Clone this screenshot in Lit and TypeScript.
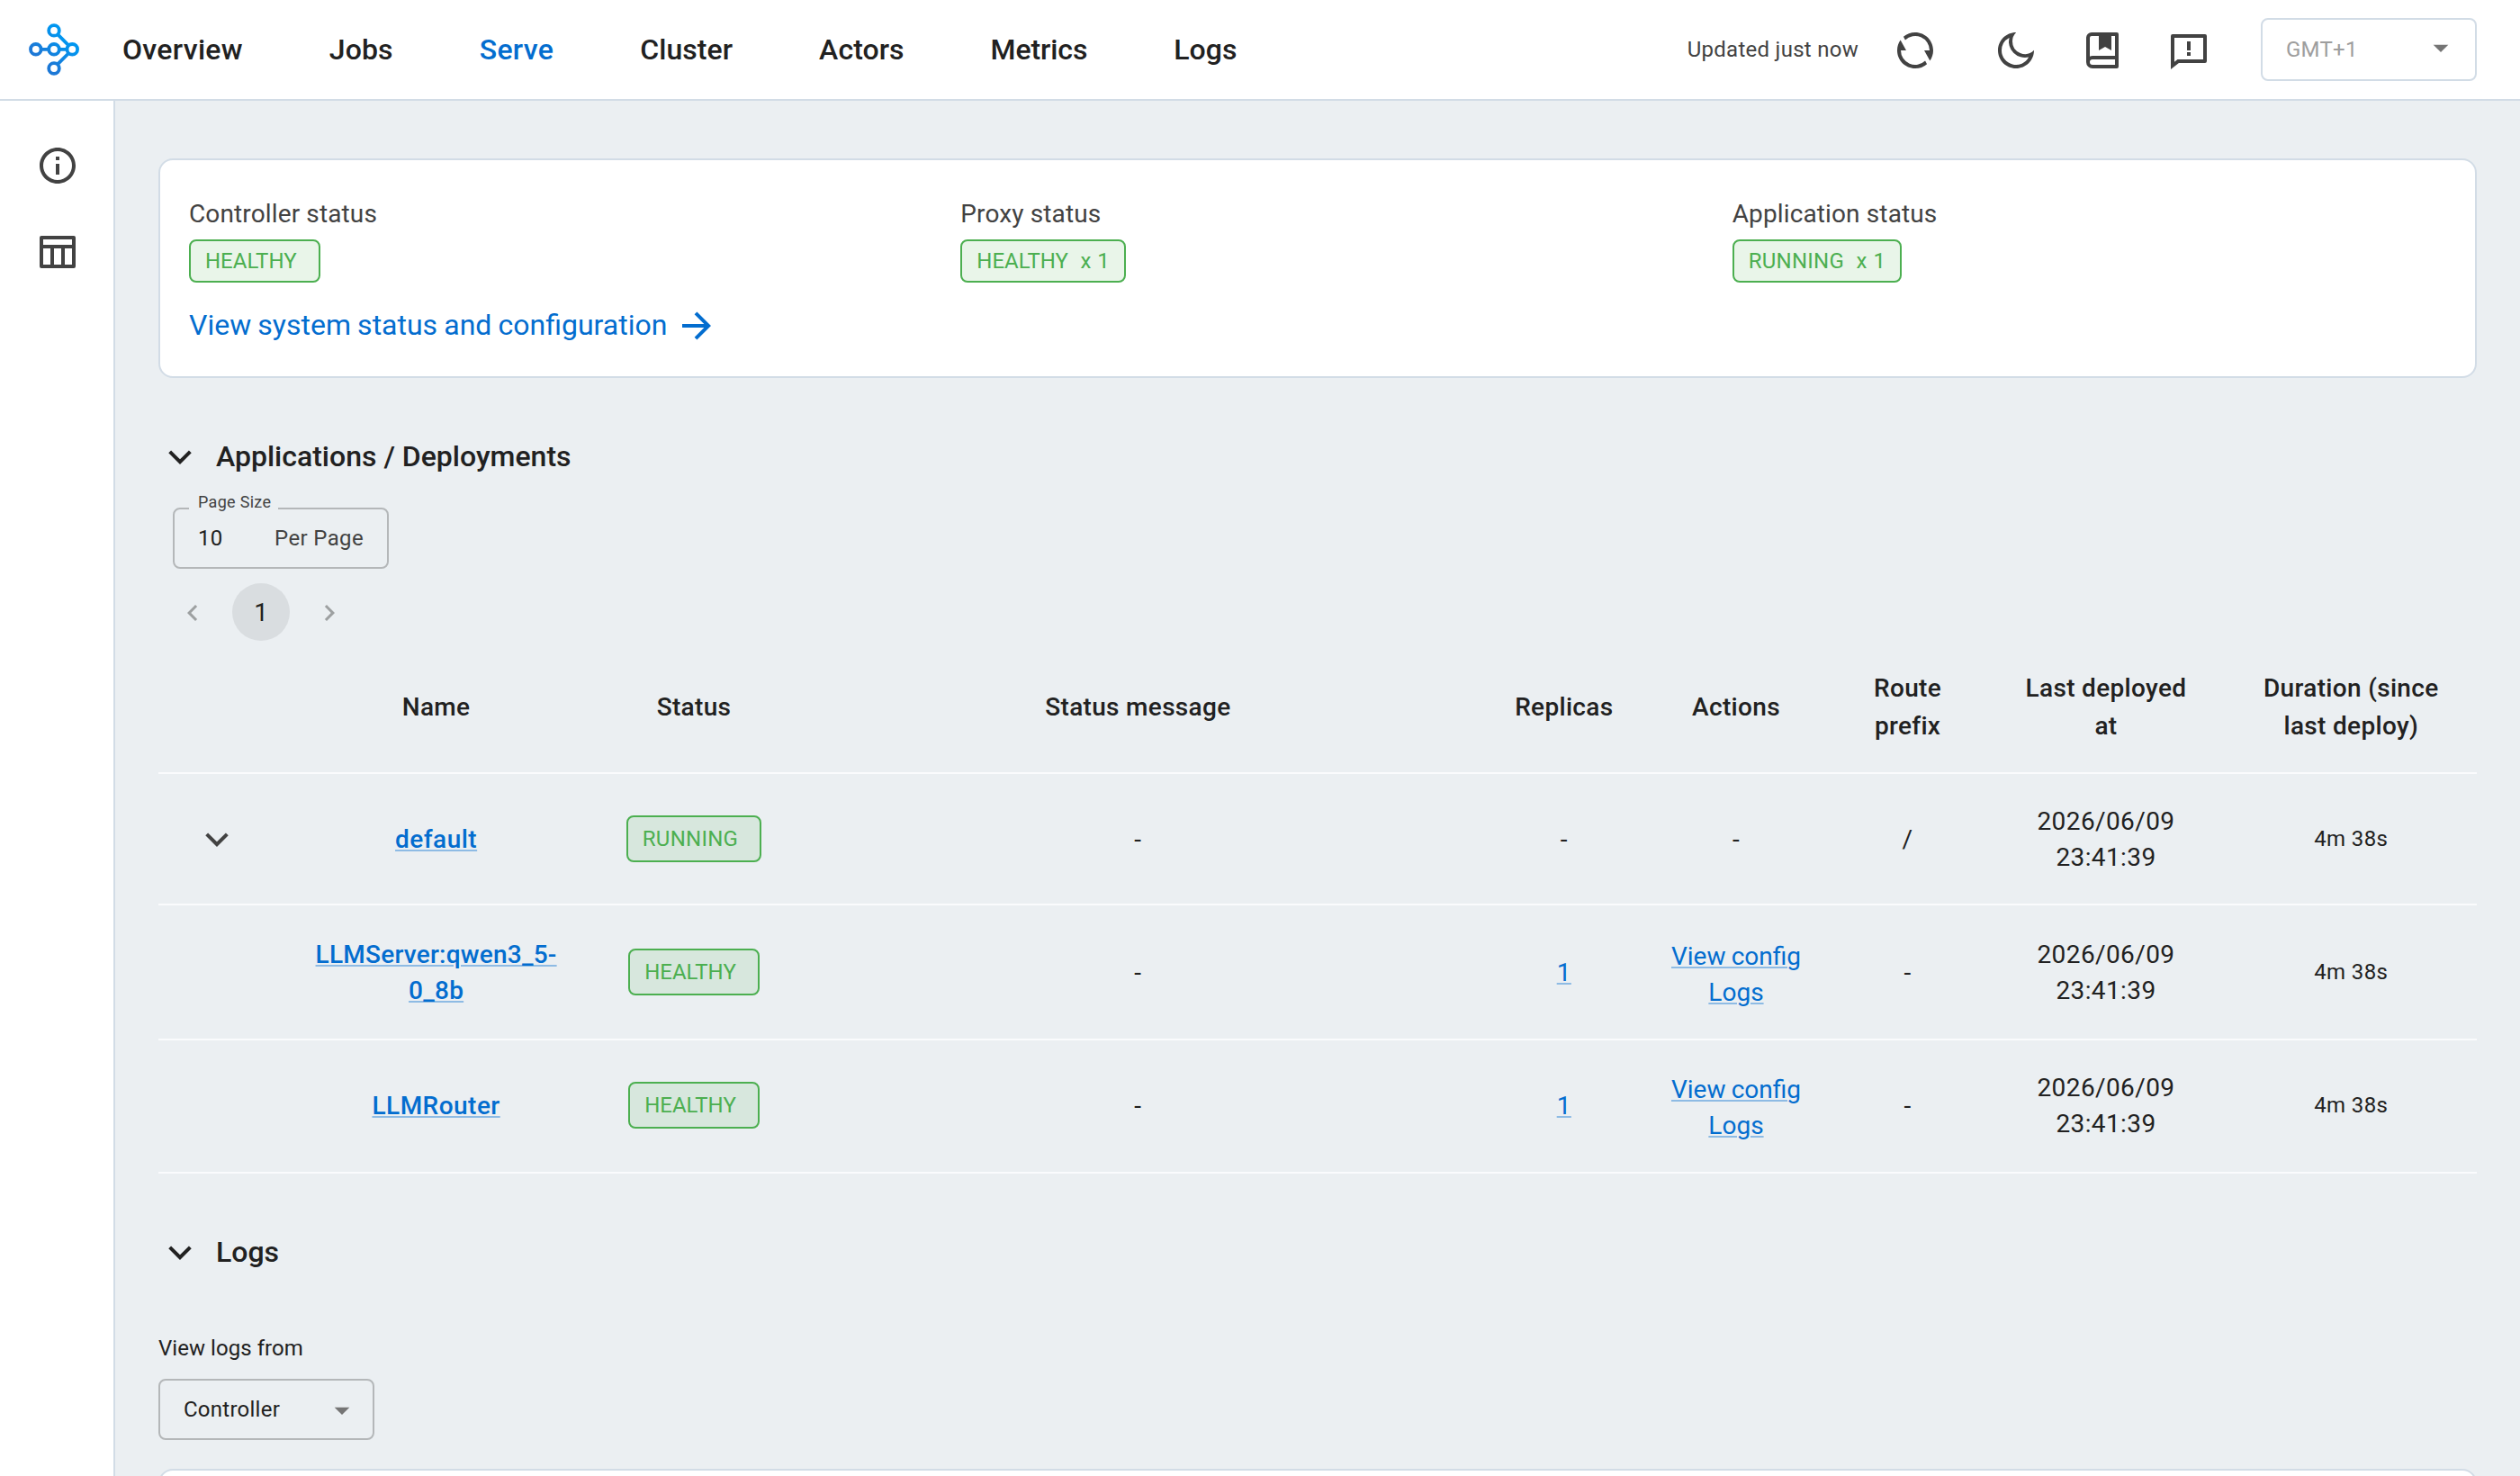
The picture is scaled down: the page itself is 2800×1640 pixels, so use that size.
import { LitElement, html, css, svg, nothing } from "lit";
import { customElement, property } from "lit/decorators.js";
import { styleMap } from "lit/directives/style-map.js";

const ICONS: Record<string, string> = {
  refresh:
    "M5.463 4.433A9.961 9.961 0 0 1 12 2c5.523 0 10 4.477 10 10 0 2.136-.67 4.116-1.81 5.74L17 12h3A8 8 0 0 0 6.46 6.228l-.997-1.795zm13.074 15.134A9.961 9.961 0 0 1 12 22C6.477 22 2 17.523 2 12c0-2.136.67-4.116 1.81-5.74L7 12H4a8 8 0 0 0 13.54 5.772l.997 1.795z",
  moon: "M10 7a7 7 0 0 0 12 4.9v.1c0 5.523-4.477 10-10 10S2 17.523 2 12 6.477 2 12 2h.1A6.979 6.979 0 0 0 10 7zm-6 5a8 8 0 0 0 15.062 3.762A9 9 0 0 1 8.238 4.938 7.999 7.999 0 0 0 4 12z",
  book: "M20 22H6.5A3.5 3.5 0 0 1 3 18.5V5a3 3 0 0 1 3-3h14a1 1 0 0 1 1 1v18a1 1 0 0 1-1 1zm-1-2v-3H6.5a1.5 1.5 0 0 0 0 3H19zM10 4H6a1 1 0 0 0-1 1v10.337A3.486 3.486 0 0 1 6.5 15H19V4h-2v8l-3.5-2-3.5 2V4z",
  feedback:
    "M6.455 19L2 22.5V4a1 1 0 0 1 1-1h18a1 1 0 0 1 1 1v14a1 1 0 0 1-1 1H6.455zM4 18.385L5.763 17H20V5H4v13.385zM11 13h2v2h-2v-2zm0-6h2v5h-2V7z",
  info: "M12 22C6.477 22 2 17.523 2 12S6.477 2 12 2s10 4.477 10 10-4.477 10-10 10zm0-2a8 8 0 1 0 0-16 8 8 0 0 0 0 16zM11 7h2v2h-2V7zm0 4h2v6h-2v-6z",
  table:
    "M4 8h16V5H4v3zm10 11v-9h-4v9h4zm2 0h4v-9h-4v9zm-8 0v-9H4v9h4zM3 3h18a1 1 0 0 1 1 1v16a1 1 0 0 1-1 1H3a1 1 0 0 1-1-1V4a1 1 0 0 1 1-1z",
  arrow:
    "M16.172 11l-5.364-5.364 1.414-1.414L20 12l-7.778 7.778-1.414-1.414L16.172 13H4v-2z",
  down: "M12 13.172l4.95-4.95 1.414 1.414L12 16 5.636 9.636 7.05 8.222z",
  prev: "M15.41 7.41L14 6l-6 6 6 6 1.41-1.41L10.83 12z",
  next: "M10 6L8.59 7.41 13.17 12l-4.58 4.59L10 18l6-6z",
  caret: "M7 10l5 5 5-5z",
};

const icon = (name: string, cls = "") =>
  html`<svg class="icon ${cls}" viewBox="0 0 24 24" aria-hidden="true">
    ${svg`<path d=${ICONS[name]} />`}
  </svg>`;

const base = css`
  * {
    box-sizing: border-box;
  }
  .icon {
    display: block;
    flex: none;
    width: 48px;
    height: 48px;
    fill: currentColor;
  }
`;

@customElement("status-chip")
class StatusChip extends LitElement {
  @property() status = "";
  @property() suffix = "";

  static styles = css`
    :host {
      display: inline-flex;
    }
    .chip {
      display: flex;
      box-sizing: border-box;
      height: var(--chip-height, 48px);
      padding: 0 16px;
      align-items: center;
      border: 2px solid #4caf50;
      border-radius: 8px;
      background: rgba(76, 175, 80, 0.125);
      color: #4caf50;
      font-size: 24px;
      line-height: 36px;
      letter-spacing: 0;
      white-space: nowrap;
    }
    .running {
      letter-spacing: 0.26px;
    }
    .tail {
      width: 8px;
    }
    .suffix {
      margin-left: 13.5px;
      letter-spacing: 0.5px;
    }
  `;

  render() {
    return html`<span class="chip">
      <span class=${this.status.toLowerCase()}>${this.status}</span>
      ${this.suffix
        ? html`<span class="suffix">${this.suffix}</span>`
        : html`<span class="tail"></span>`}
    </span>`;
  }
}

const TABS = [
  { label: "Overview", tracking: 0.31 },
  { label: "Jobs", tracking: 0.1 },
  { label: "Serve", tracking: 0.35, current: true },
  { label: "Cluster", tracking: 0.05 },
  { label: "Actors", tracking: 0.05 },
  { label: "Metrics", tracking: -0.1 },
  { label: "Logs", tracking: 0 },
];

@customElement("top-bar")
class TopBar extends LitElement {
  static styles = [
    base,
    css`
      :host {
        display: flex;
        box-sizing: border-box;
        height: 112px;
        padding: 0 48px 0 32px;
        align-items: center;
        border-bottom: 2px solid #d2dce6;
        background: #fff;
      }
      .logo {
        width: 56px;
        height: 60px;
        margin-right: 48px;
      }
      .nav {
        display: flex;
        gap: 96px;
        flex: 1;
        color: #212121;
        font-size: 32px;
        font-weight: 500;
        line-height: 48px;
      }
      .current {
        color: #036dcf;
      }
      .tools {
        display: flex;
        align-items: center;
        color: #424242;
      }
      .updated {
        margin-right: 39px;
        font-size: 24px;
        line-height: 36px;
        letter-spacing: 0.28px;
      }
      .actions {
        display: flex;
        gap: 48px;
        margin: 2px 56px 0 64px;
      }
      .refresh {
        margin-top: 2px;
      }
      .zone {
        display: flex;
        width: 240px;
        height: 70px;
        padding: 0 18px 0 26px;
        align-items: center;
        justify-content: space-between;
        border: 2px solid #d2dce6;
        border-radius: 8px;
        color: #9e9e9e;
        font-size: 24px;
        letter-spacing: 0.25px;
      }
      .caret {
        width: 40px;
        height: 40px;
        margin-top: -5px;
        color: #757575;
      }
    `,
  ];

  render() {
    return html`
      <svg class="logo" viewBox="0 0 56 60">
        <defs>
          <linearGradient id="g" gradientUnits="userSpaceOnUse" x1="18" y1="42" x2="40" y2="18">
            <stop offset="0" stop-color="#1c78d6" />
            <stop offset="1" stop-color="#0096f0" />
          </linearGradient>
        </defs>
        <g fill="none" stroke="url(#g)" stroke-width="3.8">
          <path d="M13.6 29.8H22M33.9 29.8H42.4M32 13.2L44.4 25.6M32 46.4L44.4 34" />
          <circle cx="28" cy="8.9" r="5.8" />
          <circle cx="7.8" cy="29.8" r="5.8" />
          <circle cx="28" cy="29.8" r="5.8" />
          <circle cx="48.3" cy="29.8" r="5.8" />
          <circle cx="28" cy="51" r="5.8" />
        </g>
      </svg>
      <nav class="nav">
        ${TABS.map(
          (t) =>
            html`<span
              class=${t.current ? "current" : ""}
              style=${styleMap({ letterSpacing: `${t.tracking}px` })}
              >${t.label}</span
            >`,
        )}
      </nav>
      <div class="tools">
        <span class="updated">Updated just now</span>
        ${icon("refresh", "refresh")}
        <div class="actions">${icon("moon")}${icon("book")}${icon("feedback")}</div>
        <div class="zone"><span>GMT+1</span>${icon("caret", "caret")}</div>
      </div>
    `;
  }
}

interface Row {
  kind: string;
  expandable?: boolean;
  name: string[];
  status: string;
  replicas?: string;
  actions?: string[];
  prefix: string;
}

const ROWS: Row[] = [
  { kind: "app", expandable: true, name: ["default"], status: "RUNNING", prefix: "/" },
  {
    kind: "server",
    name: ["LLMServer:qwen3_5-", "0_8b"],
    status: "HEALTHY",
    replicas: "1",
    actions: ["View config", "Logs"],
    prefix: "-",
  },
  {
    kind: "router",
    name: ["LLMRouter"],
    status: "HEALTHY",
    replicas: "1",
    actions: ["View config", "Logs"],
    prefix: "-",
  },
];

const HEADS = [
  "",
  "Name",
  "Status",
  "Status message",
  "Replicas",
  "Actions",
  "Route prefix",
  "Last deployed at",
  "Duration (since last deploy)",
];

@customElement("deployments-table")
class DeploymentsTable extends LitElement {
  static styles = [
    base,
    css`
      :host {
        display: block;
        font-size: 28px;
        line-height: 40px;
        color: #212121;
      }
      .row {
        display: grid;
        grid-template-columns: 130.6px 356px 216.8px 770px 176.8px 205.6px 175.6px 265.2px 279.4px;
        align-items: center;
        justify-items: center;
        border-bottom: 2px solid #fafbfd;
        text-align: center;
        letter-spacing: 0.4px;
      }
      .head {
        height: 150px;
        padding-top: 4px;
        font-weight: 500;
        line-height: 42px;
        letter-spacing: 0.32px;
      }
      .head > span {
        padding: 0 32px;
      }
      .app {
        height: 146px;
      }
      .server {
        height: 150px;
      }
      .router {
        height: 148px;
        padding-bottom: 2px;
      }
      .cell {
        padding-top: 1px;
      }
      .toggle {
        padding-top: 2px;
        color: #424242;
      }
      .link {
        display: block;
        color: #036dcf;
        text-decoration: underline;
        text-decoration-color: rgba(3, 109, 207, 0.4);
        text-decoration-thickness: 2px;
        text-underline-offset: 2px;
        white-space: nowrap;
      }
      .name {
        font-weight: 500;
        letter-spacing: 0.47px;
      }
      .server .name {
        letter-spacing: 0.23px;
      }
      .acts {
        padding-top: 5px;
        letter-spacing: 0;
        word-spacing: -0.8px;
      }
      .duration {
        font-size: 24px;
        letter-spacing: 0.4px;
      }
      .chip {
        --chip-height: 52px;
      }
    `,
  ];

  render() {
    return html`
      <div class="row head">${HEADS.map((h) => html`<span>${h}</span>`)}</div>
      ${ROWS.map(
        (r) => html`
          <div class="row ${r.kind}">
            <span class="toggle">${r.expandable ? icon("down") : nothing}</span>
            <span class="cell name">${r.name.map((n) => html`<a class="link">${n}</a>`)}</span>
            <status-chip class="chip" status=${r.status}></status-chip>
            <span class="cell">-</span>
            <span class="cell">${r.replicas ? html`<a class="link">${r.replicas}</a>` : "-"}</span>
            <span class=${r.actions ? "acts" : "cell"}
              >${r.actions ? r.actions.map((a) => html`<a class="link">${a}</a>`) : "-"}</span
            >
            <span class="cell">${r.prefix}</span>
            <span class="cell">2026/06/09<br />23:41:39</span>
            <span class="duration">4m 38s</span>
          </div>
        `,
      )}
    `;
  }
}

@customElement("app-root")
class AppRoot extends LitElement {
  static styles = [
    base,
    css`
      :host {
        display: flex;
        flex-direction: column;
        width: 2800px;
        height: 1640px;
        overflow: hidden;
        background: #ebeff2;
        color: #212121;
        font-family: Roboto, "Liberation Sans", sans-serif;
      }
      .body {
        display: flex;
        flex: 1;
        min-height: 0;
      }
      .side {
        display: flex;
        flex-direction: column;
        gap: 48px;
        width: 128px;
        padding: 48px 0 0 40px;
        border-right: 2px solid #d2dce6;
        background: #fff;
        color: #424242;
      }
      .main {
        flex: 1;
        padding: 64px 48px 0;
      }
      .card {
        border: 2px solid #d2dce6;
        border-radius: 16px;
        background: #fff;
      }
      .summary {
        height: 244px;
        padding-top: 39px;
      }
      .stats {
        display: grid;
        grid-template-columns: repeat(3, 1fr);
      }
      .stat {
        display: flex;
        flex-direction: column;
        align-items: flex-start;
        gap: 7px;
        padding-left: 32px;
        color: #424242;
        font-size: 28px;
        line-height: 42px;
        letter-spacing: 0.13px;
      }
      .more {
        display: flex;
        gap: 9px;
        padding: 24px 0 0 32px;
        align-items: center;
        color: #036dcf;
        font-size: 32px;
        line-height: 48px;
        word-spacing: -0.8px;
      }
      .section {
        display: flex;
        gap: 16px;
        align-items: center;
        font-size: 32px;
        font-weight: 500;
        line-height: 48px;
      }
      .title {
        margin-top: -2px;
      }
      .apps {
        margin-top: 64px;
      }
      .logs {
        margin-top: 64px;
      }
      .small {
        font-size: 24px;
        line-height: 36px;
        letter-spacing: 0.25px;
      }
      .field {
        display: flex;
        width: 240px;
        height: 68px;
        padding: 0 26px;
        align-items: center;
        justify-content: space-between;
        border: 2px solid #b4b7b9;
        border-radius: 8px;
      }
      .size {
        position: relative;
        margin: 32px 0 0 16px;
        letter-spacing: 0.36px;
      }
      .legend {
        position: absolute;
        left: 16px;
        top: -22px;
        padding: 0 8px 0 10px;
        background: #ebeff2;
        color: #424242;
        font-size: 18px;
        line-height: 28px;
        letter-spacing: 0.3px;
      }
      .unit {
        color: #424242;
      }
      .pages {
        display: flex;
        margin: 16px 0 -2px 6px;
        gap: 12px;
        font-size: 28px;
      }
      .page {
        display: flex;
        width: 64px;
        height: 64px;
        align-items: center;
        justify-content: center;
        border-radius: 50%;
      }
      .active {
        padding-top: 1px;
        background: #d9dde0;
      }
      .off {
        opacity: 0.38;
      }
      .chev {
        width: 36px;
        height: 36px;
        margin: 2px 1px 0 0;
      }
      .from {
        margin-top: 64px;
        letter-spacing: 0.05px;
      }
      .source {
        margin-top: 16px;
        padding-right: 14px;
      }
      .caret {
        width: 40px;
        height: 40px;
        margin-top: 1px;
        color: #757575;
      }
      .viewer {
        height: 200px;
        margin-top: 32px;
      }
    `,
  ];

  render() {
    const stat = (label: string, status: string, suffix = "") => html`
      <div class="stat">
        <span>${label}</span>
        <status-chip status=${status} suffix=${suffix}></status-chip>
      </div>
    `;
    return html`
      <top-bar></top-bar>
      <div class="body">
        <aside class="side">${icon("info")}${icon("table")}</aside>
        <main class="main">
          <section class="card summary">
            <div class="stats">
              ${stat("Controller status", "HEALTHY")}
              ${stat("Proxy status", "HEALTHY", "x 1")}
              ${stat("Application status", "RUNNING", "x 1")}
            </div>
            <div class="more">
              <span class="title">View system status and configuration</span>${icon("arrow")}
            </div>
          </section>
          <div class="section apps">
            ${icon("down")}<span class="title">Applications / Deployments</span>
          </div>
          <div class="field size small">
            <span class="legend">Page Size</span>
            <span>10</span><span class="unit">Per Page</span>
          </div>
          <div class="pages">
            <span class="page off">${icon("prev", "chev")}</span>
            <span class="page active">1</span>
            <span class="page off">${icon("next", "chev")}</span>
          </div>
          <deployments-table></deployments-table>
          <div class="section logs">${icon("down")}<span class="title">Logs</span></div>
          <div class="from small">View logs from</div>
          <div class="field source small"><span>Controller</span>${icon("caret", "caret")}</div>
          <section class="card viewer"></section>
        </main>
      </div>
    `;
  }
}
